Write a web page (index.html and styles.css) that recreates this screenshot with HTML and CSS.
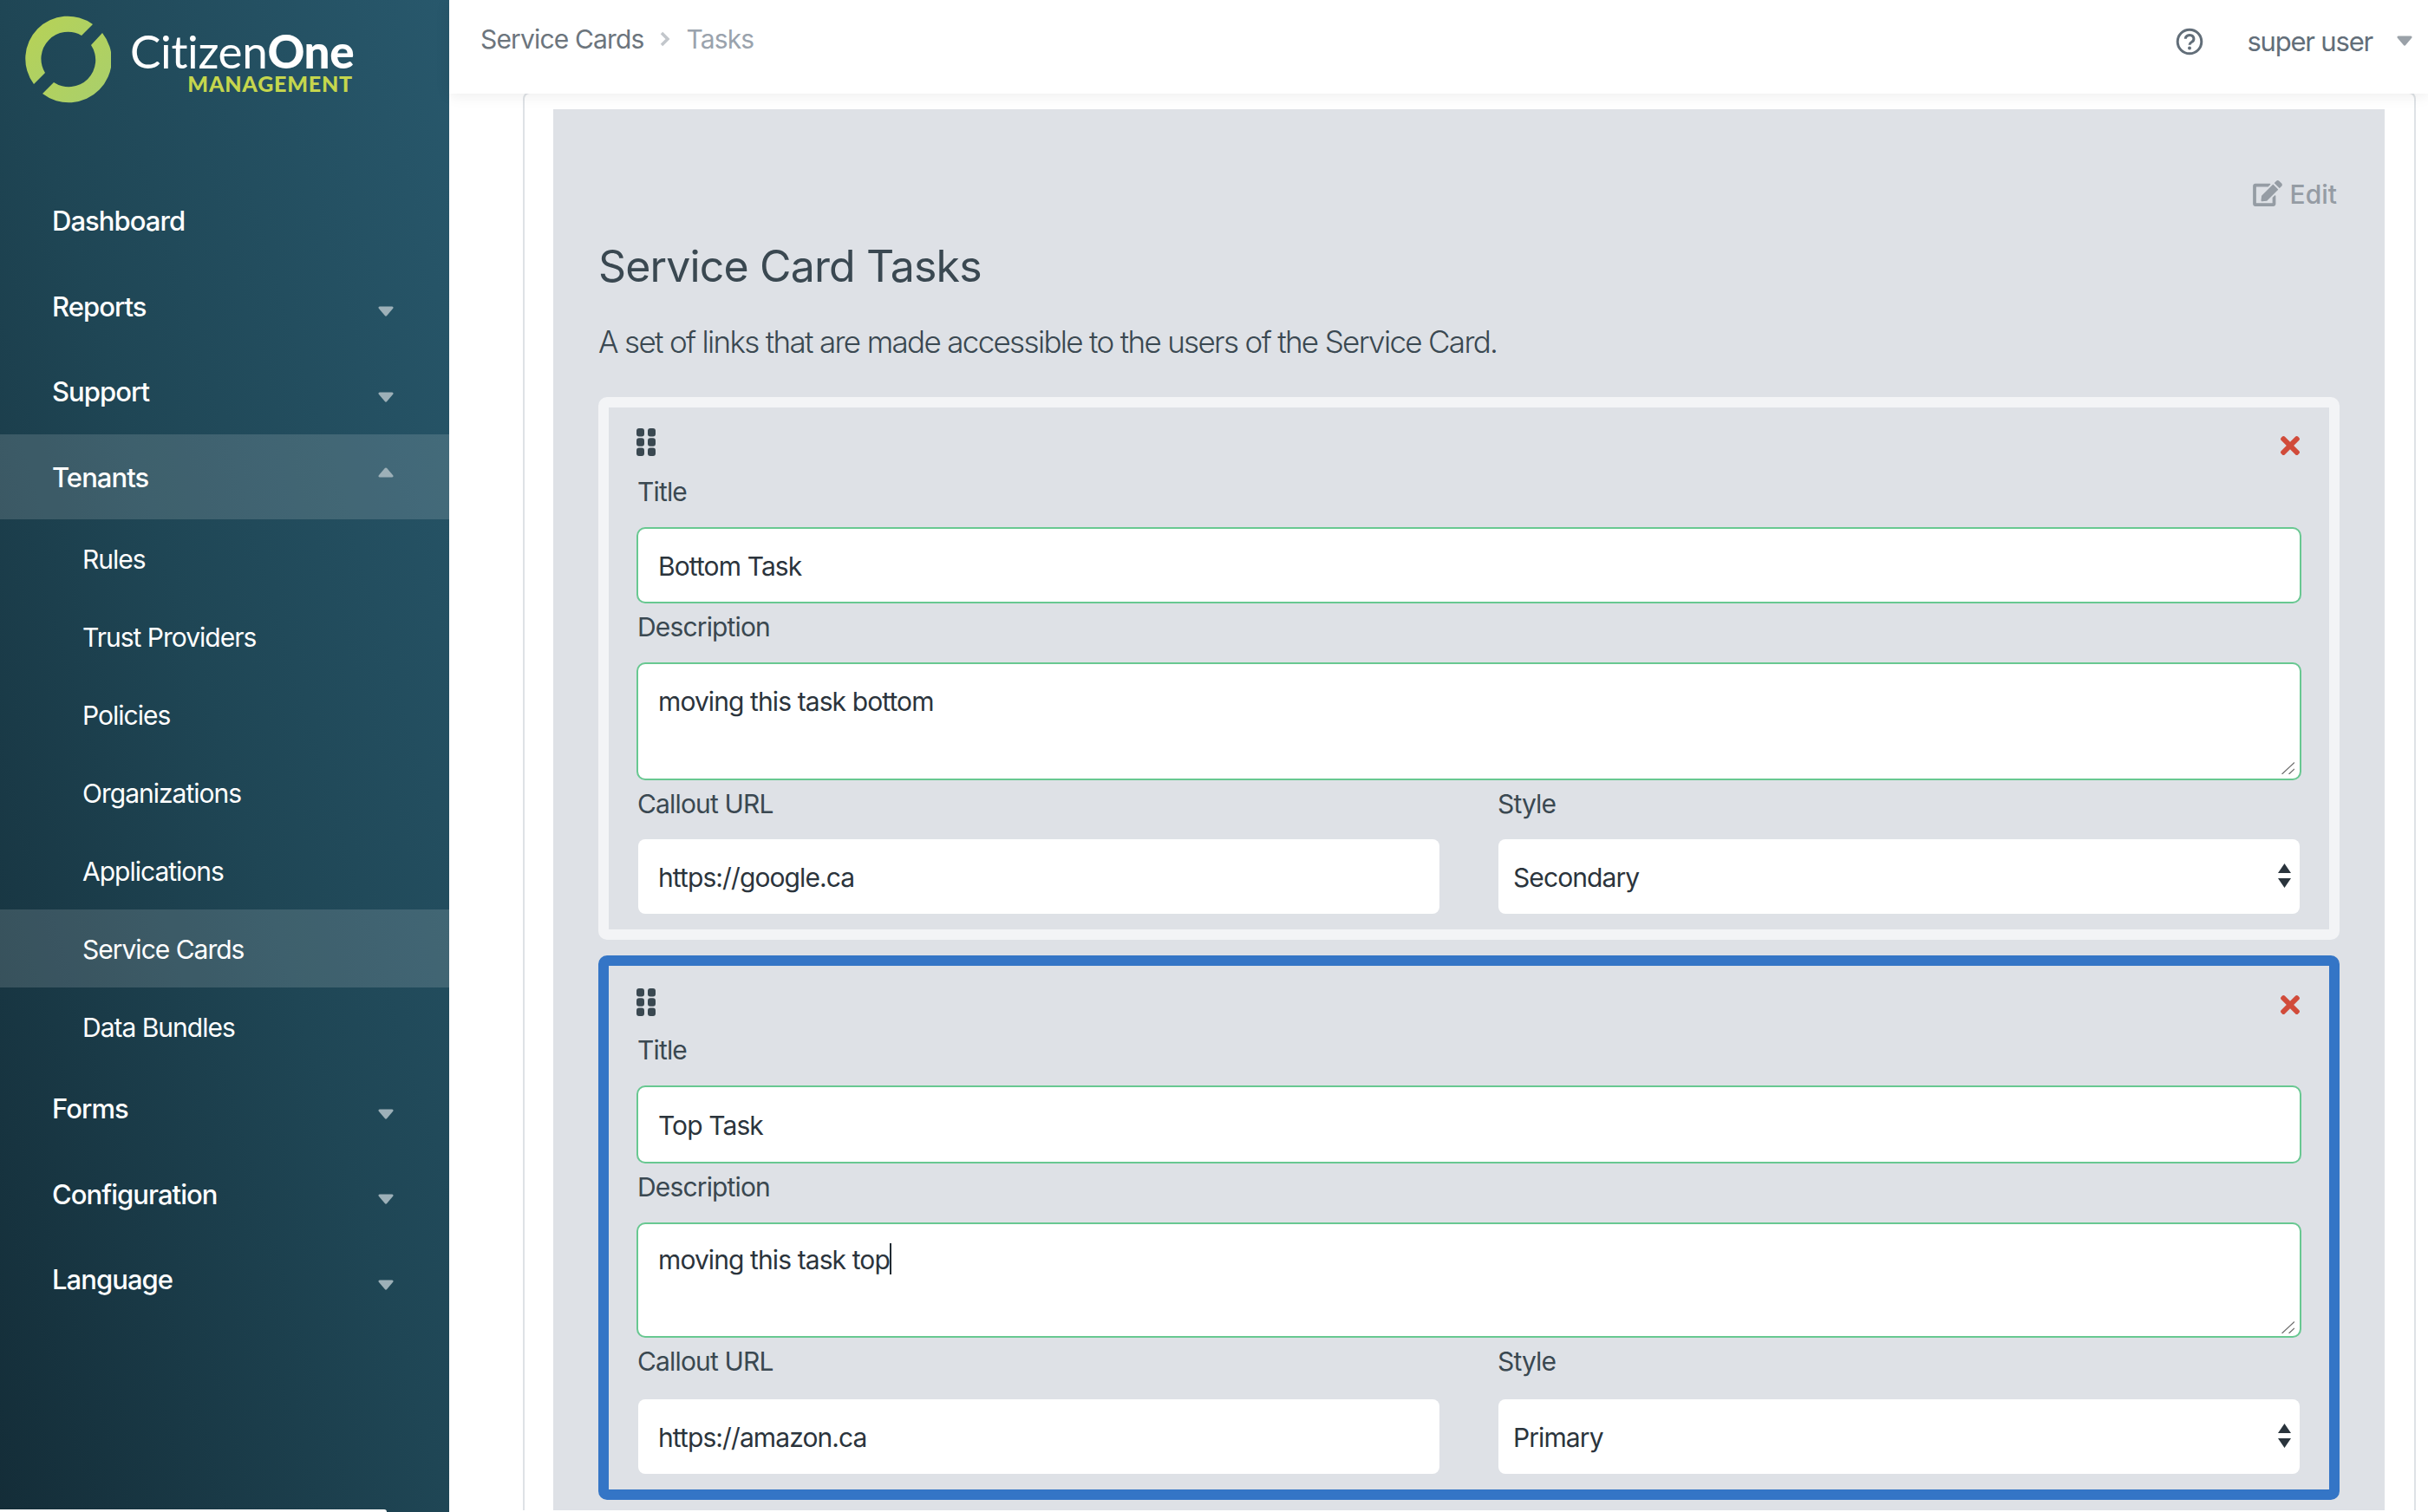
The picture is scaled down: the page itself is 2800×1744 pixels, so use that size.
FILE: index.html
```html
<!DOCTYPE html>
<html lang="en">
<head>
    <meta charset="UTF-8">
    <title>Service Card Tasks</title>
    <link rel="stylesheet" href="styles.css">
</head>
<body>
    <svg class="defs" width="0" height="0">
        <symbol id="caret" viewBox="0 0 18 12">
            <path d="M2 0.5h14c1.4 0 2 1.3 1.2 2.3l-7 8.3c-.6.7-1.8.7-2.4 0l-7-8.3C0 1.800.6.5 2 .5z"/>
        </symbol>
        <symbol id="close" viewBox="0 80 352 352">
            <path d="M242.72 256l100.07-100.07c12.28-12.28 12.28-32.19 0-44.48l-22.24-22.24c-12.28-12.28-32.19-12.28-44.48 0L176 189.28 75.93 89.21c-12.28-12.28-32.19-12.28-44.48 0L9.21 111.45c-12.28 12.28-12.28 32.19 0 44.48L109.28 256 9.21 356.07c-12.28 12.28-12.28 32.19 0 44.48l22.24 22.24c12.28 12.28 32.2 12.28 44.48 0L176 322.72l100.07 100.07c12.28 12.28 32.2 12.28 44.48 0l22.24-22.24c12.28-12.28 12.28-32.19 0-44.48L242.72 256z"/>
        </symbol>
        <symbol id="handle" viewBox="0 0 22 32">
            <rect x="0" y="0" width="9" height="9.500" rx="3"/><rect x="13" y="0" width="9" height="9.500" rx="3"/>
            <rect x="0" y="11.300" width="9" height="9.500" rx="3"/><rect x="13" y="11.300" width="9" height="9.500" rx="3"/>
            <rect x="0" y="22.500" width="9" height="9.500" rx="3"/><rect x="13" y="22.500" width="9" height="9.500" rx="3"/>
        </symbol>
        <symbol id="updown" viewBox="0 0 15 28">
            <path d="M7.500 0L15 11H0zM0 17h15L7.500 28z"/>
        </symbol>
        <symbol id="grip" viewBox="0 0 15 14">
            <path d="M0.500 14L15 0.500M8.500 14L15 8" fill="none" stroke="#6b6b6b" stroke-width="1.200"/>
        </symbol>
        <linearGradient id="ring" x1="0" y1="0" x2="1" y2="1">
            <stop offset="0" stop-color="#b8d254"/>
            <stop offset="1" stop-color="#a8cf6e"/>
        </linearGradient>
    </svg>

    <aside class="sidebar">
        <div class="brand">
            <svg class="brand-ring" width="100" height="102" viewBox="28 17 100 102">
                <path fill="url(#ring)" d="M107 28A49 49 0 0 0 39 97L52 84A31 31 0 0 1 94 41z"/>
                <path fill="url(#ring)" d="M118 38A49.500 49.500 0 0 1 49 108L62 95A31 31 0 0 0 105 52z"/>
            </svg>
            <div class="brand-name">
                <div class="brand-title">Citizen<b>One</b></div>
                <div class="brand-sub">MANAGEMENT</div>
            </div>
        </div>
        <nav class="nav">
            <a class="nav-item">Dashboard</a>
            <a class="nav-item">Reports<svg class="nav-caret"><use href="#caret"/></svg></a>
            <a class="nav-item">Support<svg class="nav-caret"><use href="#caret"/></svg></a>
            <a class="nav-item active">Tenants<svg class="nav-caret up"><use href="#caret"/></svg></a>
            <a class="nav-sub">Rules</a>
            <a class="nav-sub">Trust Providers</a>
            <a class="nav-sub">Policies</a>
            <a class="nav-sub">Organizations</a>
            <a class="nav-sub">Applications</a>
            <a class="nav-sub active">Service Cards</a>
            <a class="nav-sub">Data Bundles</a>
            <a class="nav-item">Forms<svg class="nav-caret"><use href="#caret"/></svg></a>
            <a class="nav-item">Configuration<svg class="nav-caret"><use href="#caret"/></svg></a>
            <a class="nav-item">Language<svg class="nav-caret"><use href="#caret"/></svg></a>
        </nav>
        <div class="sidebar-strip"></div>
    </aside>

    <div class="main">
        <header class="topbar">
            <div class="crumbs">
                <a class="crumb">Service Cards</a>
                <svg class="crumb-sep" width="13" height="18" viewBox="0 0 13 18"><path d="M3 2l7 7-7 7" fill="none" stroke="#c2c6cb" stroke-width="3.500"/></svg>
                <span class="crumb current">Tasks</span>
            </div>
            <div class="user">
                <svg class="help" width="32" height="32" viewBox="0 0 32 32">
                    <circle cx="16" cy="16" r="13.800" fill="none" stroke="#626e79" stroke-width="3"/>
                    <path d="M11.300 12.800a4.800 4.300 0 1 1 7.500 3.500c-1.800 1.100-2.800 1.700-2.800 3.400" fill="none" stroke="#626e79" stroke-width="3"/>
                    <circle cx="16" cy="23.400" r="2" fill="#626e79"/>
                </svg>
                <span class="user-name">super user</span>
                <svg class="user-caret"><use href="#caret"/></svg>
            </div>
        </header>

        <div class="content">
            <div class="card">
                <section class="panel">
                    <div class="edit-row">
                        <a class="edit">
                            <svg width="34" height="30" viewBox="0 0 576 512"><path d="M402.600 83.200l90.200 90.200c3.800 3.800 3.800 10 0 13.800L274.400 405.600l-92.800 10.300c-12.400 1.400-22.900-9.100-21.500-21.500l10.300-92.800L388.800 83.200c3.800-3.800 10-3.800 13.800 0zm162-22.900l-48.800-48.800c-15.200-15.200-39.900-15.200-55.200 0l-35.400 35.400c-3.800 3.800-3.800 10 0 13.800l90.200 90.200c3.800 3.800 10 3.800 13.800 0l35.400-35.400c15.200-15.300 15.200-40 0-55.200zM384 346.200V448H64V128h229.800c3.200 0 6.200-1.300 8.500-3.500l40-40c7.600-7.600 2.200-20.500-8.500-20.500H48C21.500 64 0 85.500 0 112v352c0 26.500 21.500 48 48 48h352c26.500 0 48-21.500 48-48V306.200c0-10.700-12.900-16-20.500-8.500l-40 40c-2.200 2.300-3.500 5.300-3.500 8.500z"/></svg>
                            Edit
                        </a>
                    </div>
                    <h1 class="panel-title">Service Card Tasks</h1>
                    <p class="panel-desc">A set of links that are made accessible to the users of the Service Card.</p>

                    <div class="task">
                        <div class="task-head">
                            <svg class="task-handle"><use href="#handle"/></svg>
                            <svg class="task-close"><use href="#close"/></svg>
                        </div>
                        <label class="field-label">Title</label>
                        <input class="field valid" type="text" value="Bottom Task">
                        <label class="field-label">Description</label>
                        <div class="area-wrap">
                            <textarea class="field area valid">moving this task bottom</textarea>
                            <svg class="area-grip"><use href="#grip"/></svg>
                        </div>
                        <div class="field-row">
                            <div>
                                <label class="field-label">Callout URL</label>
                                <input class="field" type="text" value="https://google.ca">
                            </div>
                            <div>
                                <label class="field-label">Style</label>
                                <div class="select-wrap">
                                    <select class="field select"><option>Secondary</option></select>
                                    <svg class="select-arrows"><use href="#updown"/></svg>
                                </div>
                            </div>
                        </div>
                    </div>

                    <div class="task selected">
                        <div class="task-head">
                            <svg class="task-handle"><use href="#handle"/></svg>
                            <svg class="task-close"><use href="#close"/></svg>
                        </div>
                        <label class="field-label">Title</label>
                        <input class="field valid" type="text" value="Top Task">
                        <label class="field-label">Description</label>
                        <div class="area-wrap">
                            <textarea class="field area valid">moving this task top</textarea>
                            <span class="text-caret"></span>
                            <svg class="area-grip"><use href="#grip"/></svg>
                        </div>
                        <div class="field-row">
                            <div>
                                <label class="field-label">Callout URL</label>
                                <input class="field" type="text" value="https://amazon.ca">
                            </div>
                            <div>
                                <label class="field-label">Style</label>
                                <div class="select-wrap">
                                    <select class="field select"><option>Primary</option></select>
                                    <svg class="select-arrows"><use href="#updown"/></svg>
                                </div>
                            </div>
                        </div>
                    </div>
                </section>
            </div>
        </div>
    </div>
</body>
</html>
```

FILE: styles.css
```css
* {
    box-sizing: border-box;
}
html, body {
    height: 100%;
}
body {
    margin: 0;
    display: flex;
    height: 100vh;
    overflow: hidden;
    background-color: #fff;
    font-family: Inter, "Liberation Sans", sans-serif;
    color: #3a4851;
}
.defs {
    position: absolute;
}

/* sidebar */
.sidebar {
    position: relative;
    flex: 0 0 518px;
    background: linear-gradient(to top right, #142d38 0%, #1f4655 50%, #28586c 100%);
    color: #fff;
}
.brand {
    display: flex;
    height: 205px;
    padding: 17px 0 0 28px;
}
.brand-ring {
    flex: none;
}
.brand-name {
    margin: 20px 0 0 22px;
    width: 257px;
    text-align: right;
    font-family: Lato, "Open Sans", sans-serif;
}
.brand-title {
    font-size: 53px;
    line-height: 44px;
    font-weight: 400;
    letter-spacing: -0.35px;
    white-space: nowrap;
}
.brand-title b {
    font-weight: 900;
}
.brand-sub {
    margin-top: 3px;
    font-size: 25px;
    line-height: 24px;
    font-weight: 900;
    letter-spacing: 0.8px;
    color: #c5d64d;
}
.nav {
    display: flex;
    flex-direction: column;
}
.nav-item {
    display: flex;
    align-items: center;
    justify-content: space-between;
    height: 98.500px;
    padding: 1px 64px 0 60px;
    font-size: 31px;
    font-weight: 500;
    letter-spacing: -0.95px;
}
.nav-sub {
    display: flex;
    align-items: center;
    height: 90px;
    padding: 1px 0 0 95px;
    font-size: 30px;
    letter-spacing: -1px;
}
.nav-item.active, .nav-sub.active {
    background-color: rgba(255, 255, 255, 0.14);
}
.nav-caret {
    width: 18px;
    height: 12px;
    margin-top: 12px;
    fill: #9db0b8;
}
.nav-caret.up {
    margin-top: -10px;
    transform: rotate(180deg);
}
.sidebar-strip {
    position: absolute;
    left: 0;
    bottom: 0;
    width: 446px;
    height: 3px;
    background-color: #fff;
    border-top-right-radius: 3px;
}

/* top bar */
.main {
    flex: 1;
    min-width: 0;
    display: flex;
    flex-direction: column;
}
.topbar {
    position: relative;
    z-index: 1;
    flex: 0 0 108px;
    display: flex;
    justify-content: space-between;
    padding: 0 18px 18px 36px;
    background-color: #fff;
    box-shadow: 0 2px 16px rgba(0, 0, 0, 0.08);
}
.crumbs, .user {
    display: flex;
    align-items: center;
}
.crumbs {
    font-size: 30px;
    letter-spacing: -0.85px;
    color: #6c757d;
}
.crumb-sep {
    margin: 0 18px;
}
.crumb.current {
    color: #9aa3ad;
}
.user {
    margin-top: 4px;
}
.help {
    margin: 2px 50px 0 0;
}
.user-name {
    font-size: 31px;
    letter-spacing: -1.2px;
    color: #626e79;
}
.user-caret {
    width: 18px;
    height: 12px;
    margin: 0 0 0 28px;
    fill: #9aa1a8;
}

/* content */
.content {
    flex: 1;
    min-height: 0;
    padding: 0 14px 0 85px;
}
.card {
    height: 100%;
    margin-top: -2px;
    padding: 18px 34px 0 33px;
    border: 2px solid #dee2e6;
    border-bottom: 0;
    border-radius: 8px 8px 0 0;
}
.panel {
    height: 100%;
    padding: 80px 52px 0;
    background-color: #dee1e6;
}
.edit-row {
    display: flex;
    justify-content: flex-end;
    height: 36px;
    padding-right: 3px;
}
.edit {
    display: flex;
    align-items: center;
    gap: 9px;
    font-size: 30px;
    font-weight: 500;
    color: #959ca4;
}
.edit svg {
    fill: #959ca4;
    margin-top: -2px;
}
.panel-title {
    margin: 35px 0 33px;
    font-size: 50px;
    line-height: 60px;
    font-weight: 400;
    letter-spacing: -0.85px;
}
.panel-desc {
    margin: 0 0 40px;
    font-size: 35px;
    line-height: 48px;
    font-weight: 300;
    letter-spacing: -1.68px;
}

/* task cards */
.task {
    margin-bottom: 18px;
    padding: 0 32px 16px;
    border: 12px solid #f3f4f6;
    border-radius: 10px;
}
.task.selected {
    border-color: #3475c6;
}
.task-head {
    display: flex;
    justify-content: space-between;
    height: 70px;
}
.task-handle {
    width: 22px;
    height: 32px;
    margin-top: 24px;
    fill: #3a4851;
}
.task-close {
    width: 22px;
    height: 22px;
    margin: 33px 2px 0 0;
    fill: #d14b3a;
}
.field-label {
    display: block;
    height: 54px;
    margin-bottom: 14px;
    padding-left: 1px;
    font-size: 30px;
    line-height: 54px;
    letter-spacing: -0.85px;
}
.field-row .field-label {
    margin-bottom: 12px;
}
.field {
    display: block;
    width: 100%;
    height: 90px;
    margin: 0;
    padding: 2px 23px 0;
    border: 2px solid transparent;
    border-radius: 10px;
    background-color: #fff;
    background-clip: padding-box;
    font-family: inherit;
    font-size: 30px;
    letter-spacing: -0.9px;
    color: #2b343c;
    outline: none;
}
.field.valid {
    height: 88px;
    border-color: #68c891;
}
.field.area {
    height: 136px;
    padding-top: 22px;
    line-height: 42px;
    resize: none;
}
.area-wrap {
    position: relative;
}
.area-grip {
    position: absolute;
    right: 8px;
    bottom: 7px;
    width: 15px;
    height: 14px;
}
.field-row {
    display: grid;
    grid-template-columns: 1fr 1fr;
    column-gap: 64px;
}
.select-wrap {
    position: relative;
}
.select {
    padding-left: 17px;
    appearance: none;
}
.select-arrows {
    position: absolute;
    top: 30px;
    right: 12px;
    width: 15px;
    height: 28px;
    fill: #2a343c;
}
.text-caret {
    position: absolute;
    top: 24px;
    left: 292px;
    width: 2px;
    height: 36px;
    background-color: #212b33;
}

/* the selected card was caught a few pixels off the first one */
.selected .task-handle {
    margin-top: 26px;
}
.selected .task-close {
    margin-top: 34px;
}
.selected .field.valid {
    height: 90px;
}
.selected .field.area {
    height: 133px;
    padding-top: 20px;
}
.selected .area-grip {
    bottom: 5px;
}
.selected .field-row .field-label {
    margin-bottom: 15px;
}
```
